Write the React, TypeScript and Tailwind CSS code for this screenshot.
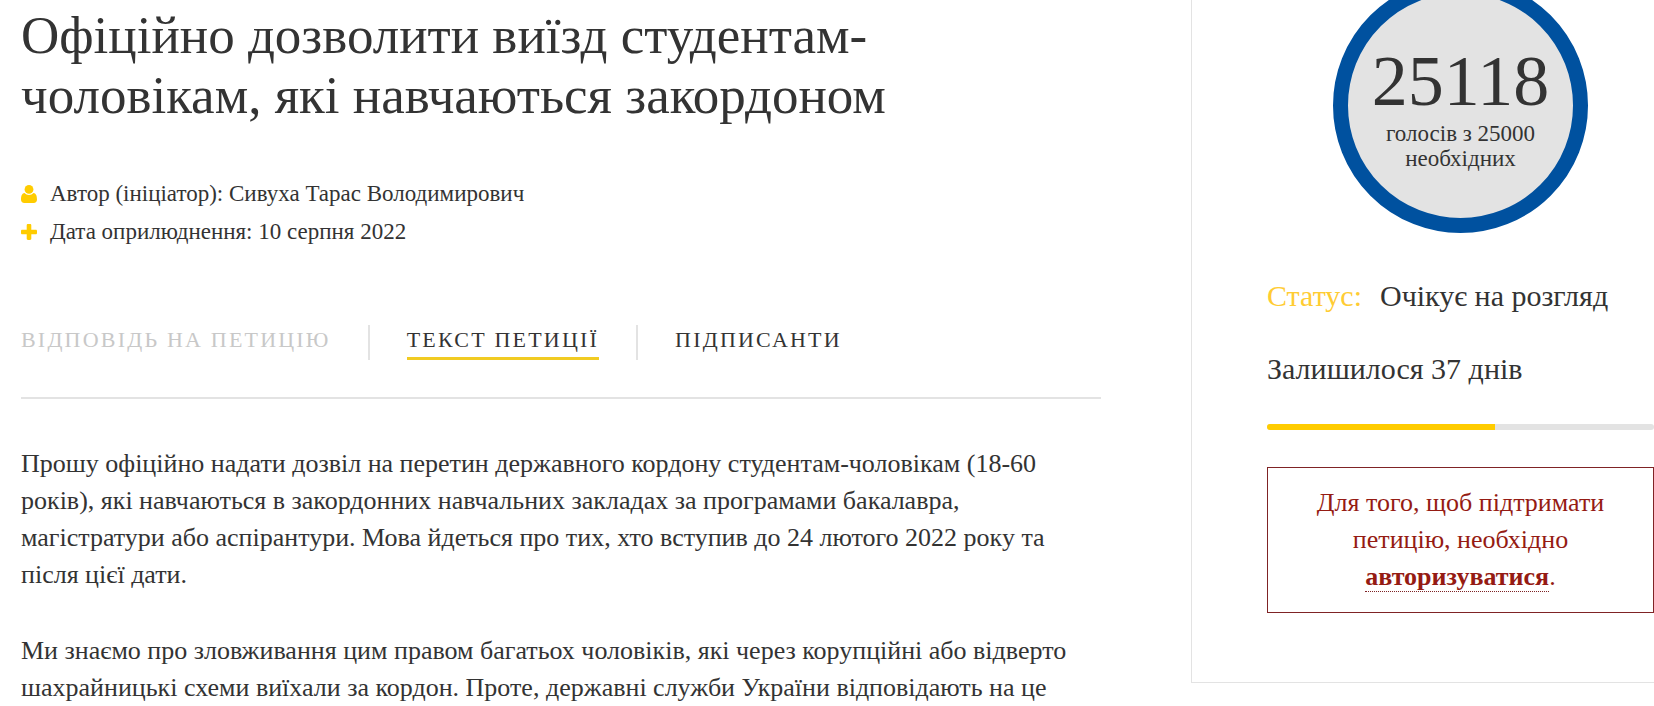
import React from 'react';

const PARAGRAPHS = [
  'Прошу офіційно надати дозвіл на перетин державного кордону студентам-чоловікам (18-60 років), які навчаються в закордонних навчальних закладах за програмами бакалавра, магістратури або аспірантури. Мова йдеться про тих, хто вступив до 24 лютого 2022 року та після цієї дати.',
  'Ми знаємо про зловживання цим правом багатьох чоловіків, які через корупційні або відверто шахрайницькі схеми виїхали за кордон. Проте, державні служби України відповідають на це',
];

const UserIcon = () => (
  <svg width="16" height="18" viewBox="0 0 16 18" fill="currentColor" aria-hidden="true">
    <circle cx="8" cy="4.4" r="4.4" />
    <path d="M3.600 7.900C1 8.100 0 10.600 0 14.500 0 16.600 1.300 18 3.300 18h9.400c2 0 3.300-1.400 3.300-3.500 0-3.900-1-6.400-3.600-6.600C11.300 9.100 9.800 9.900 8 9.900s-3.300-.8-4.400-2z" />
  </svg>
);

const PlusIcon = () => (
  <svg width="16" height="16" viewBox="0 0 16 16" fill="currentColor" aria-hidden="true">
    <path d="M7 0h2c.8 0 1.300.5 1.300 1.200v4.500h4.500c.7 0 1.200.5 1.200 1.300v2c0 .8-.5 1.300-1.200 1.300h-4.500v4.500c0 .7-.5 1.200-1.300 1.200H7c-.8 0-1.300-.5-1.300-1.200v-4.500H1.200C.5 10.300 0 9.800 0 9V7c0-.8.5-1.300 1.200-1.300h4.500V1.200C5.700.5 6.200 0 7 0z" />
  </svg>
);

const MetaRow = ({ icon, children }: { icon: React.ReactNode; children: React.ReactNode }) => (
  <li className="flex items-center gap-[13px] leading-[38px]">
    <span className="text-[#fc0]">{icon}</span>
    <span>{children}</span>
  </li>
);

// Petition tabs
const Tabs = () => (
  <nav className="flex items-center border-b-2 border-[#e3e3e3] pb-[37px] text-[22px] leading-[30px] tracking-widest">
    <button disabled className="h-[35px] border-b-3 border-transparent pb-0.5 uppercase text-[#c8c8c8]">Відповідь на петицію</button>
    <span className="mx-[37px] h-[35px] w-0.5 bg-[#e3e3e3]" />
    <button className="h-[35px] border-b-3 border-[#f1cb22] pb-0.5 uppercase">Текст петиції</button>
    <span className="mx-[37px] h-[35px] w-0.5 bg-[#e3e3e3]" />
    <button className="h-[35px] border-b-3 border-transparent pb-0.5 uppercase">Підписанти</button>
  </nav>
);

// Votes counter, status and progress
const Sidebar = () => (
  <aside className="w-[463px] shrink-0 border-b border-l border-[#e3e3e3] pb-[69px] pl-[75px]">
    <div className="mx-auto -mt-[22px] flex size-[255px] flex-col items-center rounded-full border-[15px] border-[#00519f] bg-[#e3e3e3] pt-12 text-center">
      <div className="text-[72px] leading-[80px]">25118</div>
      <div className="w-44 text-[23px] leading-[25px]">голосів з 25000 необхідних</div>
    </div>

    <div className="mt-[43px] flex gap-[18px] text-[30px] leading-10">
      <span className="text-[#fc3]">Статус:</span>
      <span>Очікує на розгляд</span>
    </div>
    <div className="mt-[33px] text-[30px] leading-10">Залишилося 37 днів</div>

    <div className="mt-[35px] h-1.5 overflow-hidden rounded-full bg-[#e3e3e3]">
      <div className="h-full bg-[#fc0]" style={{ width: `${(1 - 37 / 90) * 100}%` }} />
    </div>

    <p className="mt-[37px] border border-[#7f2325] px-9 pt-4 pb-[17px] text-center text-[26px] leading-[37px] text-[#951b13]">
      Для того, щоб підтримати петицію, необхідно{' '}
      <a href="#login" className="border-b border-dotted border-[#7f2325] font-bold">авторизуватися</a>.
    </p>
  </aside>
);

export default function App() {
  return (
    <div className="min-h-screen overflow-hidden bg-white font-['Georgia','Liberation_Serif',serif] text-[#333]">
      <div className="flex items-start gap-[90px] pl-[21px]">
        <main className="min-w-0 flex-1">
          <h1 className="max-w-[960px] pt-[5px] text-[53px] leading-[60px]">
            Офіційно дозволити виїзд студентам-чоловікам, які навчаються закордоном
          </h1>

          <ul className="mt-[50px] mb-[74px] text-[23px]">
            <MetaRow icon={<UserIcon />}>Автор (ініціатор): Сивуха Тарас Володимирович</MetaRow>
            <MetaRow icon={<PlusIcon />}>Дата оприлюднення: 10 серпня 2022</MetaRow>
          </ul>

          <Tabs />

          <div className="mt-[46px] space-y-[39px] text-[26px] leading-[37px]">
            {PARAGRAPHS.map((text, i) => (
              <p key={i}>{text}</p>
            ))}
          </div>
        </main>

        <Sidebar />
      </div>
    </div>
  );
}
